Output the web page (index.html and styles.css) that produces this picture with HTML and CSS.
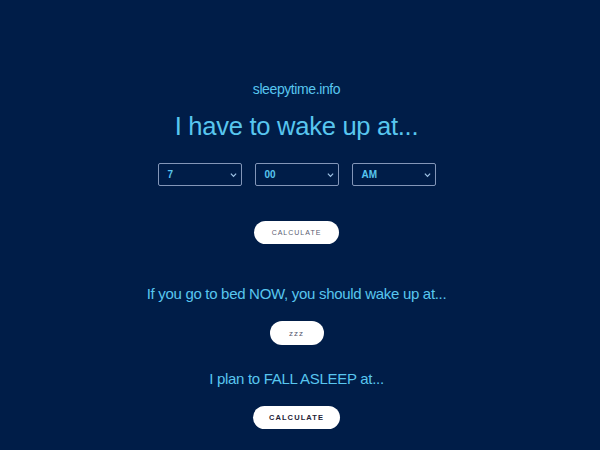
FILE: index.html
```html
<!DOCTYPE html>
<html>
<head>
<meta charset="utf-8">
<link rel="stylesheet" href="styles.css">
</head>
<body>
<main class="page">
  <div class="brand">sleepytime.info</div>
  <h1 class="title">I have to wake up at...</h1>
  <div class="selects">
    <div class="select"><span>7</span><svg viewBox="0 0 8 6" class="chev"><path d="M1 1.5 L4 4.5 L7 1.5"/></svg></div>
    <div class="select"><span>00</span><svg viewBox="0 0 8 6" class="chev"><path d="M1 1.5 L4 4.5 L7 1.5"/></svg></div>
    <div class="select"><span>AM</span><svg viewBox="0 0 8 6" class="chev"><path d="M1 1.5 L4 4.5 L7 1.5"/></svg></div>
  </div>
  <button class="btn btn-calc1">CALCULATE</button>
  <h2 class="sub sub-now">If you go to bed NOW, you should wake up at...</h2>
  <button class="btn btn-zzz">zzz</button>
  <h2 class="sub sub-plan">I plan to FALL ASLEEP at...</h2>
  <button class="btn btn-calc2">CALCULATE</button>
</main>
</body>
</html>
```
FILE: styles.css
```css
html, body {
  margin: 0;
  padding: 0;
  background: #001d48;
  height: 100%;
  overflow: hidden;
}
.page {
  display: flex;
  flex-direction: column;
  align-items: center;
  font-family: "Liberation Sans", Arial, sans-serif;
  color: #58c6ef;
  padding-top: 80px;
  padding-right: 7px;
}
.brand {
  font-size: 14px;
  line-height: 18px;
  letter-spacing: -0.4px;
}
.title {
  margin: 0;
  margin-top: 10px;
  font-size: 25.6px;
  font-weight: normal;
  line-height: 36px;
  letter-spacing: -0.3px;
}
.selects {
  display: flex;
  gap: 13px;
  margin-top: 19px;
}
.select {
  width: 84px;
  height: 23px;
  box-sizing: border-box;
  border: 1px solid #8396b8;
  border-radius: 2px;
  display: flex;
  align-items: center;
  justify-content: space-between;
  padding: 0 4px 0 9px;
  font-size: 10px;
  font-weight: bold;
  color: #58c6ef;
}
.chev {
  width: 7px;
  height: 6px;
  fill: none;
  stroke: #9fc4e6;
  stroke-width: 1.4;
}
.btn {
  border: none;
  background: #ffffff;
  border-radius: 12px;
  font-family: "Liberation Sans", Arial, sans-serif;
  padding: 0;
  height: 23px;
}
.btn-calc1 {
  width: 85px;
  margin-top: 35px;
  font-size: 7px;
  letter-spacing: 1px;
  color: #5a5d72;
}
.sub {
  margin: 0;
  font-size: 15px;
  font-weight: normal;
  line-height: 22px;
  letter-spacing: -0.3px;
}
.sub-now {
  margin-top: 39px;
}
.btn-zzz {
  width: 54px;
  height: 24px;
  margin-top: 16px;
  font-size: 8px;
  letter-spacing: 1px;
  color: #55596e;
}
.sub-plan {
  margin-top: 23px;
}
.btn-calc2 {
  width: 87px;
  margin-top: 16px;
  font-size: 7.5px;
  font-weight: bold;
  letter-spacing: 1.1px;
  color: #1d2236;
}
```
